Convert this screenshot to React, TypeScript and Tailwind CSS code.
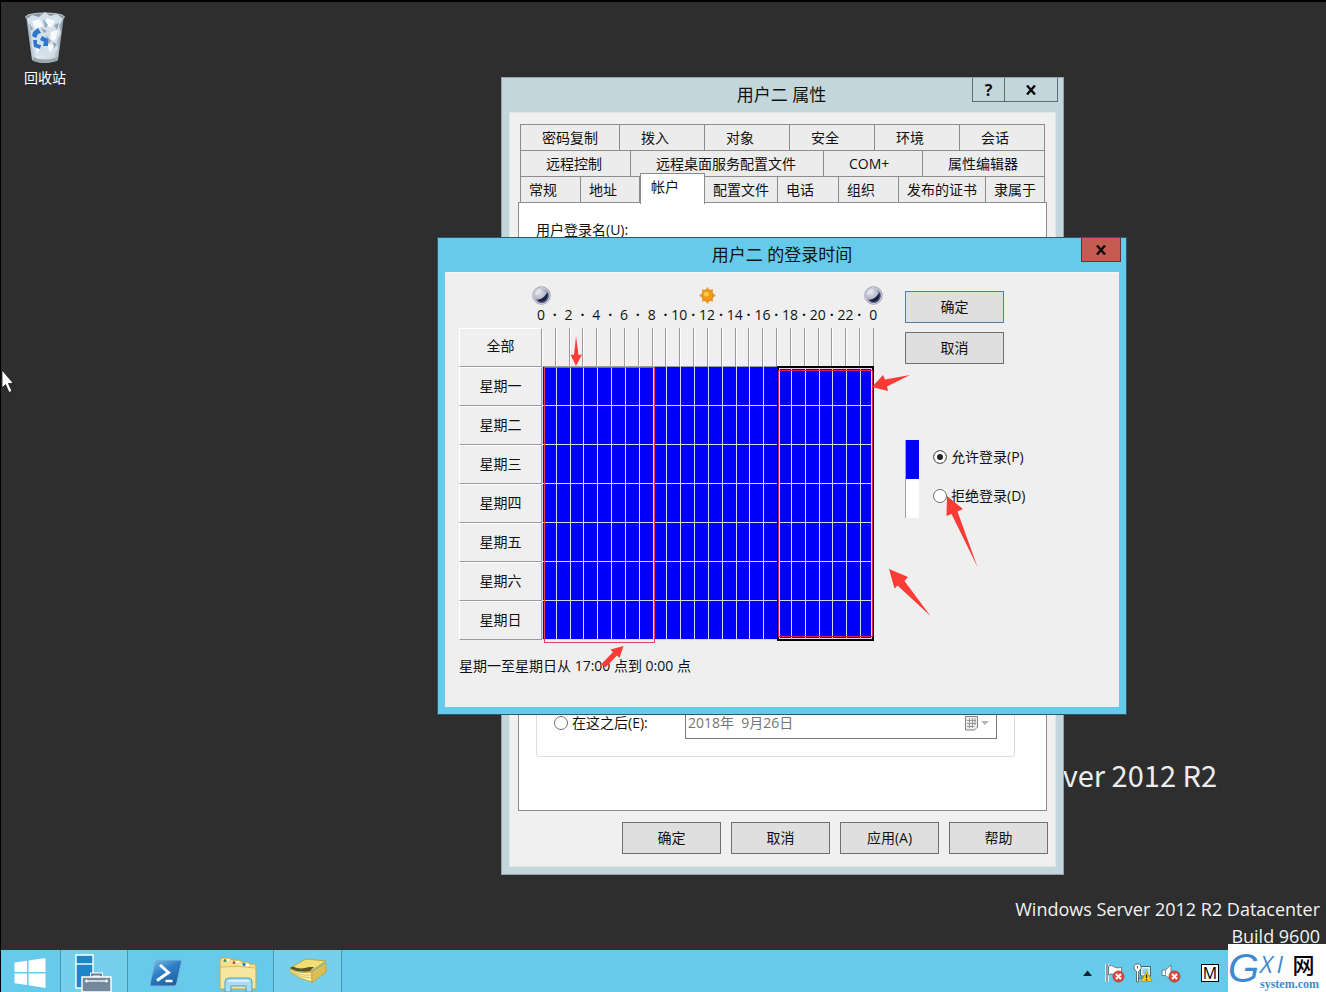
import React from 'react'

type Tab = { name: string; width: string }

const tabRows: { pad: string; tabs: Tab[] }[] = [
    {
        pad: 'pl-[21px]',
        tabs: [
            { name: '密码复制', width: 'w-[99px]' },
            { name: '拨入', width: 'w-[85px]' },
            { name: '对象', width: 'w-[85px]' },
            { name: '安全', width: 'w-[85px]' },
            { name: '环境', width: 'w-[85px]' },
            { name: '会话', width: 'w-[85px]' },
        ],
    },
    {
        pad: 'pl-[25px]',
        tabs: [
            { name: '远程控制', width: 'w-[110px]' },
            { name: '远程桌面服务配置文件', width: 'w-[193px]' },
            { name: 'COM+', width: 'w-[99px]' },
            { name: '属性编辑器', width: 'w-[122px]' },
        ],
    },
    {
        pad: 'pl-2',
        tabs: [
            { name: '常规', width: 'w-[60px]' },
            { name: '地址', width: 'w-[59px]' },
            { name: '帐户', width: 'w-[65px]' },
            { name: '配置文件', width: 'w-[73px]' },
            { name: '电话', width: 'w-[61px]' },
            { name: '组织', width: 'w-[60px]' },
            { name: '发布的证书', width: 'w-[87px]' },
            { name: '隶属于', width: 'w-[59px]' },
        ],
    },
]

const days = ['星期一', '星期二', '星期三', '星期四', '星期五', '星期六', '星期日']
const hours = Array.from({ length: 24 }, (_, i) => i)
const marks = Array.from({ length: 25 }, (_, i) => (i % 2 ? '·' : String(i % 24)))

function PushButton({ children, primary }: { children: React.ReactNode; primary?: boolean }) {
    return (
        <button
            type="button"
            className={`h-8 w-[99px] border text-sm leading-5 bg-[#dfdfdf] ${primary ? 'border-[#4d7fa8]' : 'border-[#6f6f6f]'}`}
        >
            {children}
        </button>
    )
}

function CloseIcon() {
    return (
        <svg className="mx-auto" width="12" height="10" viewBox="0 0 12 10" aria-hidden="true">
            <path d="M2 0.5L10 9.5M10 0.5L2 9.5" stroke="#0b0b0b" strokeWidth="2.4" />
        </svg>
    )
}

function Moon() {
    return (
        <svg width="19" height="19" viewBox="0 0 19 19" aria-hidden="true">
            <defs>
                <radialGradient id="moon" cx="0.34" cy="0.3" r="0.85">
                    <stop offset="0" stopColor="#e4e4ec" />
                    <stop offset="0.5" stopColor="#b4b7c8" />
                    <stop offset="0.75" stopColor="#5a6184" />
                    <stop offset="1" stopColor="#20264a" />
                </radialGradient>
            </defs>
            <circle cx="9.5" cy="9.5" r="8.8" fill="#d8dae4" stroke="#8c90a2" strokeWidth="0.8" />
            <circle cx="9.5" cy="9.5" r="7.4" fill="url(#moon)" />
            <path d="M5 14Q11 13.500 15.500 6.500Q16.600 12 12.500 14.800Q8 17 5 14Z" fill="#1b2146" />
            <path d="M4 9Q4.500 4.500 9 4" stroke="#fff" strokeWidth="1.200" fill="none" opacity="0.700" />
        </svg>
    )
}

function Sun() {
    return (
        <svg width="19" height="19" viewBox="0 0 19 19" aria-hidden="true">
            <path
                d="M9.5 0.8L11.3 4L15.2 3.1L14.5 7L18 9.5L14.5 11.8L15.3 15.6L11.4 15L9.5 18.2L7.5 15L3.8 15.8L4.5 11.8L1 9.5L4.5 7.1L3.7 3.2L7.6 4Z"
                fill="#f0a030"
            />
            <circle cx="9.5" cy="9.5" r="5.6" fill="#f29a12" stroke="#d0801c" strokeWidth="0.7" />
            <circle cx="8.3" cy="8" r="2.6" fill="#ffc648" />
        </svg>
    )
}

function RecycleBin() {
    return (
        <div className="flex w-16 flex-col items-center text-sm leading-5 text-white">
            <svg width="44" height="54" viewBox="0 0 44 54" aria-hidden="true">
                <defs>
                    <linearGradient id="bin" x1="0" x2="1">
                        <stop offset="0" stopColor="#8fa0ae" />
                        <stop offset="0.3" stopColor="#e3ebf1" />
                        <stop offset="0.75" stopColor="#c9d4dc" />
                        <stop offset="1" stopColor="#7d8b96" />
                    </linearGradient>
                </defs>
                <path d="M3 5L9 49Q21 55 35 49L41 5Z" fill="url(#bin)" />
                <ellipse cx="22" cy="6" rx="19.5" ry="4" fill="#8a969e" stroke="#c3cdd4" />
                <path d="M4 8L9 4L16 6L22 1L27 5L34 3L40 8L36 15L38 22L34 30L35 38L29 45L20 43L13 45L9 36L8 22Z" fill="#d3dfe9" />
                <path d="M9 10L17 8L20 15L12 18ZM24 7L32 10L28 17L22 13ZM28 21L35 19L32 30L27 28ZM24 33L31 34L27 42ZM12 33L17 38L14 43Z" fill="#f8fbfd" />
                <path d="M20 8L25 14L22 17ZM31 14L36 12L34 19ZM23 24L28 30L25 33ZM18 17L24 20L21 22ZM6 12L10 18L8 20ZM30 31L34 33L31 37Z" fill="#93a7b8" />
                <path d="M10 21L15 17L18 22L15 23L13 27L9 25ZM19 25L25 28L25 35L20 35L21 31L17 29ZM10 29L14 29L14 33L18 34L17 38L11 36Z" fill="#2f78cf" />
                <path d="M10 46Q21 51 35 46L34 50Q21 54 10 50Z" fill="#9aa7ad" />
            </svg>
            <span className="mt-[3px]">回收站</span>
        </div>
    )
}

function TabStrip() {
    return (
        <div className="ml-[10px] w-[525px]" role="tablist">
            {tabRows.map((row, i) => (
                <div className="flex h-[26px] border-l border-[#8c8c8c]" key={i}>
                    {row.tabs.map((tab) =>
                        tab.name === '帐户' ? (
                            <button
                                type="button"
                                role="tab"
                                aria-selected="true"
                                key={tab.name}
                                className="relative z-10 -mt-[3px] h-[31px] w-[65px] border-x border-t border-[#8c8c8c] bg-white pb-1 pl-[10px] text-left text-sm leading-5"
                            >
                                {tab.name}
                            </button>
                        ) : (
                            <button
                                type="button"
                                role="tab"
                                aria-selected="false"
                                key={tab.name}
                                className={`whitespace-nowrap border-r border-t border-[#8c8c8c] bg-[#ececec] text-left text-sm leading-5 ${row.pad} ${tab.width}`}
                            >
                                {tab.name}
                            </button>
                        )
                    )}
                </div>
            ))}
        </div>
    )
}

function PropertiesWindow() {
    return (
        <section className="absolute left-[500px] top-[75px] w-[563px] border border-[#8fa3ab] bg-[#c3d6dc] px-[7px] pb-[7px] text-[#111]">
            <header className="flex h-[34px] items-start">
                <span className="w-[82px]" />
                <h2 className="flex-1 pt-[5px] text-center text-[17px] leading-6">用户二 属性</h2>
                <button type="button" aria-label="帮助" className="h-6 w-[33px] border border-t-0 border-[#5d6d74] text-base font-bold leading-5">
                    ?
                </button>
                <button type="button" aria-label="关闭" className="-ml-px -mr-[2px] h-6 w-[54px] border border-t-0 border-[#5d6d74]">
                    <CloseIcon />
                </button>
            </header>
            <div className="border border-[#dde6e9] bg-[#f0f0f0] pb-3 pt-[11px]">
                <TabStrip />
                <div className="mx-2 flex h-[609px] flex-col justify-between border border-[#8c8c8c] bg-white pb-[53px] pl-[17px] pr-[31px] pt-[17px]">
                    <label className="text-sm leading-5">用户登录名(U):</label>
                    <div className="flex items-start rounded-[3px] border border-[#dcdcdc] pb-[17px] pl-[17px] pr-[17px] pt-2">
                        <label className="flex flex-1 items-center gap-1 pt-[6px] text-sm leading-5">
                            <input
                                type="radio"
                                name="expires"
                                className="size-[14px] appearance-none rounded-full border border-[#707070] bg-white"
                            />
                            在这之后(E):
                        </label>
                        <div className="flex h-8 w-[312px] items-center border border-[#7a7a7a] pl-[2px] pr-[7px]">
                            <input
                                type="text"
                                aria-label="日期"
                                disabled
                                defaultValue="2018年  9月26日"
                                className="min-w-0 flex-1 whitespace-pre text-sm leading-5 text-[#757575]"
                            />
                            <svg width="24" height="15" viewBox="0 0 24 15" aria-hidden="true">
                                <path d="M0.5 0.5H12.5V11L9.5 14H0.5Z" fill="#ececec" stroke="#808080" />
                                <path d="M2 4.5H11M2 7.5H11M2 10.5H9M4.5 2V12M7.5 2V12M10 2V9" stroke="#8c8c8c" strokeWidth="0.8" />
                                <path d="M16 5H24L20 9Z" fill="#b4b4b4" />
                            </svg>
                        </div>
                    </div>
                </div>
                <div className="mt-[11px] flex justify-end gap-[10px] pr-[7px]">
                    <PushButton>确定</PushButton>
                    <PushButton>取消</PushButton>
                    <PushButton>应用(A)</PushButton>
                    <PushButton>帮助</PushButton>
                </div>
            </div>
        </section>
    )
}

function HoursTable() {
    return (
        <div className="relative mt-[3px]">
            <table className="w-full table-fixed border-separate border-spacing-0 text-sm leading-5">
                <thead>
                    <tr className="h-[39px]">
                        <th className="w-[83px] border-b border-l border-r border-t border-b-[#9a9a9a] border-l-white border-r-[#9a9a9a] border-t-white pb-1 font-normal">
                            全部
                        </th>
                        {hours.map((h) => (
                            <th key={h} className="border-b border-l border-r border-b-[#9a9a9a] border-l-white border-r-[#9a9a9a]" />
                        ))}
                    </tr>
                </thead>
                <tbody>
                    {days.map((day) => (
                        <tr key={day} className="h-[39px]">
                            <th className="border-b border-l border-r border-t border-b-[#9a9a9a] border-l-white border-r-[#9a9a9a] border-t-white pb-[2px] font-normal">
                                {day}
                            </th>
                            {hours.map((h) => (
                                <td key={h} className="border-b border-l border-[#d5d5f2] bg-[#0000fa]" />
                            ))}
                        </tr>
                    ))}
                </tbody>
            </table>
            {/* selected block, 17:00 to 0:00 */}
            <div className="absolute right-0 top-[38px] h-[275px] w-[97px] border-2 border-black shadow-[inset_0_0_0_1px_#d5d5f2]" />
            <div className="absolute right-[1px] top-[42px] h-[267px] w-[95px] border border-[#d8204e]" />
            <div className="absolute left-[85px] top-[39px] h-[276px] w-[111px] border border-[#f03c5c]" />
        </div>
    )
}

function LogonHoursDialog() {
    return (
        <section className="absolute left-[436px] top-[235px] w-[690px] border border-[#2c5a68] bg-[#66cbea] px-[7px] pb-[7px] text-[#111]">
            <header className="flex h-[34px] items-start">
                <span className="w-[38px]" />
                <h2 className="flex-1 pt-[5px] text-center text-[17px] leading-6">用户二 的登录时间</h2>
                <button type="button" aria-label="关闭" className="-mr-[2px] h-6 w-10 border border-t-0 border-[#6b2f38] bg-[#c75a50]">
                    <CloseIcon />
                </button>
            </header>
            <div className="flex border-t border-[#f4f4f4] bg-[#efefef] pb-[31px] pl-[14px] pt-[13px]">
                <div className="w-[415px] shrink-0">
                    <div className="ml-[73px] flex w-[351px] justify-between">
                        <Moon />
                        <Sun />
                        <Moon />
                    </div>
                    <div className="ml-[75px] flex h-5 w-[346px] text-sm leading-5">
                        {marks.map((m, i) => (
                            <span key={i} className={`flex w-0 flex-1 justify-center ${m === '·' ? 'font-bold' : ''}`}>
                                {m}
                            </span>
                        ))}
                    </div>
                    <HoursTable />
                    <p className="mt-4 text-sm leading-5">星期一至星期日从 17:00 点到 0:00 点</p>
                </div>
                <div className="ml-[31px] pt-[5px]">
                    <div className="flex flex-col gap-[9px]">
                        <PushButton primary>确定</PushButton>
                        <PushButton>取消</PushButton>
                    </div>
                    <div className="mt-[76px] flex gap-[14px]">
                        <div className="w-[14px] border-l border-[#a0a0a0]">
                            <div className="h-[39px] bg-[#0000fa]" />
                            <div className="h-[39px] bg-white" />
                        </div>
                        <div className="text-sm leading-5">
                            <label className="flex h-[39px] items-center gap-1 pb-[6px]">
                                <input
                                    type="radio"
                                    name="logon"
                                    defaultChecked
                                    className="size-[14px] appearance-none rounded-full border border-[#707070] bg-white checked:bg-[#222] checked:shadow-[inset_0_0_0_3px_white]"
                                />
                                允许登录(P)
                            </label>
                            <label className="flex h-[39px] items-center gap-1 pb-[6px]">
                                <input
                                    type="radio"
                                    name="logon"
                                    className="size-[14px] appearance-none rounded-full border border-[#707070] bg-white checked:bg-[#222] checked:shadow-[inset_0_0_0_3px_white]"
                                />
                                拒绝登录(D)
                            </label>
                        </div>
                    </div>
                </div>
            </div>
            <svg className="pointer-events-none absolute left-0 top-0" width="688" height="476" viewBox="438 238 688 476" fill="#fb3b35" aria-hidden="true">
                <path d="M576 336L578.5 355L582 354.500L576 366L570.500 354.500L574 355Z" />
                <path d="M872 387L883 375L885 379.500L910 375L887 386.500L888 391Z" />
                <path d="M947 496L963 509L957.500 511.500L977.500 567L951.500 514L946.500 516Z" />
                <path d="M889 569L908 577L904.500 581L930.500 616L897.500 585.500L894.500 588.500Z" />
                <path d="M623.500 646L619.500 658L617 655.500L605.500 667.500L601.500 664L613 652L610.500 649.500Z" />
            </svg>
        </section>
    )
}

function Taskbar() {
    return (
        <footer className="flex h-[42px] items-stretch bg-[#66cbea]">
            <button type="button" aria-label="开始" className="flex w-[60px] items-center justify-center border-r border-[#4796b0] pr-[2px] pt-1">
                <svg width="32" height="30" viewBox="0 0 32 30" fill="#fff" aria-hidden="true">
                    <path d="M0.500 4.500L13 2.700V14H0.500ZM14.500 2.500L31.500 0V14H14.500ZM0.500 15.500H13V27L0.500 25.300ZM14.500 15.500H31.500V30L14.500 27.300Z" />
                </svg>
            </button>
            <button type="button" aria-label="服务器管理器" className="flex w-[67px] items-end justify-center border-r border-[#4796b0] bg-[#75d0ec]">
                <svg width="38" height="38" viewBox="0 0 38 38" aria-hidden="true">
                    <path d="M1 1H18V34H1Z" fill="#1d86c8" stroke="#fff" strokeWidth="1.400" />
                    <path d="M1 10H18" stroke="#fff" strokeWidth="1.400" />
                    <path d="M17 23V20.500H26V23" fill="none" stroke="#fff" strokeWidth="4" />
                    <path d="M17 23V20.500H26V23" fill="none" stroke="#6b7f92" strokeWidth="2" />
                    <path d="M7 23H36V38H7Z" fill="#74889c" stroke="#fff" strokeWidth="1.400" />
                    <path d="M11 27H32" stroke="#fff" strokeWidth="1.300" />
                    <path d="M12 25.500L10 27L12 28.500ZM31 25.500L33 27L31 28.500Z" fill="#fff" stroke="#fff" strokeWidth="0.600" />
                </svg>
            </button>
            <button type="button" aria-label="PowerShell" className="flex w-[75px] items-center justify-center pt-1">
                <svg width="34" height="28" viewBox="0 0 34 28" aria-hidden="true">
                    <defs>
                        <linearGradient id="ps" x1="0" y1="0" x2="0.600" y2="1">
                            <stop offset="0" stopColor="#7fc0ec" />
                            <stop offset="0.500" stopColor="#2f7fc4" />
                            <stop offset="1" stopColor="#1f62a4" />
                        </linearGradient>
                    </defs>
                    <path d="M8 1H31Q33 1 32.500 3L27.500 25Q27 27 25 27H2.500Q0.500 27 1 25L6 3Q6.500 1 8 1Z" fill="url(#ps)" stroke="#7eb4dc" />
                    <path d="M11 6L19.500 13.500L8 21.500" fill="none" stroke="#fff" strokeWidth="3" />
                    <path d="M16.500 22H23.500" stroke="#fff" strokeWidth="2.500" />
                </svg>
            </button>
            <button type="button" aria-label="文件资源管理器" className="flex w-[70px] items-end justify-center">
                <svg width="40" height="35" viewBox="0 0 40 35" aria-hidden="true">
                    <path d="M2 3Q2 1 4 1H12L14 3H22L24 5H30L32 7H36Q38 7 38 9V32H2Z" fill="#f3df90" stroke="#c8a94e" />
                    <path d="M5 3H11M14 5H21M23 8H31" stroke="#fff" strokeWidth="2" />
                    <path d="M3 10H37V31H3Z" fill="#f6e69f" />
                    <path d="M3 10Q20 8 37 11" stroke="#d9bb63" fill="none" />
                    <circle cx="7" cy="3.500" r="1.500" fill="#2f9a4b" />
                    <circle cx="16" cy="5.500" r="1.500" fill="#d0442e" />
                    <circle cx="26" cy="7.500" r="1.700" fill="#2d7fd0" />
                    <path d="M7 35V25Q7 21 11 21H30Q34 21 34 25V35H28V29H13V35Z" fill="#a6dcf5" stroke="#4e9fc6" />
                    <path d="M10 24H31" stroke="#e5f7ff" strokeWidth="1.500" />
                </svg>
            </button>
            <button type="button" aria-label="用户和计算机" className="flex w-[69px] justify-center border-x border-[#4796b0] bg-[#75d0ec] pt-2">
                <svg width="38" height="26" viewBox="0 0 38 26" aria-hidden="true">
                    <path d="M1 10L17 1L37 3L22 13Z" fill="#f2df73" stroke="#b99b35" strokeWidth="0.800" />
                    <path d="M1 10L4 8.500Q11 12 20 9L25 9L21 13Q8 15 1 10Z" fill="#5b561f" />
                    <path d="M1 11Q10 16 23 14L23 24Q10 21 1 14Z" fill="#fbf2a8" stroke="#b99b35" strokeWidth="0.800" />
                    <path d="M23 14L37 5V14L23 24.500Z" fill="#e2c456" stroke="#b99b35" strokeWidth="0.800" />
                    <path d="M2 13Q11 18 23 17M3 15Q12 20 23 20M24 18L36 9M24 21L36 12" stroke="#c7a940" strokeWidth="0.700" fill="none" />
                </svg>
            </button>
            <div className="ml-auto flex items-center gap-2 pr-[107px] pt-[3px]">
                <svg className="mr-1" width="11" height="6" viewBox="0 0 11 6" aria-label="显示隐藏的图标">
                    <path d="M1 6L5.500 0.500L10 6Z" fill="#10252c" />
                </svg>
                <svg width="20" height="20" viewBox="0 0 20 20" aria-label="操作中心">
                    <path d="M2 1V19" stroke="#fff" strokeWidth="3.500" />
                    <path d="M2 1V19" stroke="#5b6c75" strokeWidth="1.300" />
                    <path d="M3.500 3Q7 1.500 9.500 4Q13 6 16.500 4V12Q12 14 9 11.500Q6 10 3.500 12Z" fill="#fff" stroke="#65757e" strokeWidth="0.900" />
                    <circle cx="13.500" cy="13.500" r="5.500" fill="#e14a3d" stroke="#a82a22" strokeWidth="0.700" />
                    <path d="M11 11L16 16M16 11L11 16" stroke="#fff" strokeWidth="2" />
                </svg>
                <svg width="20" height="20" viewBox="0 0 20 20" aria-label="网络">
                    <path d="M7.500 3.500H17.500V13H7.500Z" fill="#dff2f8" stroke="#4f626b" />
                    <path d="M9.500 5.500H15.500V11H9.500Z" fill="#8fd0e6" />
                    <path d="M2.500 1H6.500L8 3V6L5.500 8.500V19H3.500V8.500L1 6V3Z" fill="#fff" stroke="#4f626b" strokeWidth="0.900" />
                    <path d="M4.500 3V5.500" stroke="#4f626b" />
                    <path d="M5.500 15H10" stroke="#4f626b" />
                    <path d="M13.500 8.500L19 18.500H8Z" fill="#f9d32c" stroke="#a98a12" strokeWidth="0.700" />
                    <path d="M13.500 11.500V15M13.500 16V17.500" stroke="#222" strokeWidth="1.400" />
                </svg>
                <svg width="20" height="20" viewBox="0 0 20 20" aria-label="音量">
                    <path d="M1 7H4.500L10 2V17L4.500 12.500H1Z" fill="#fff" stroke="#65757e" strokeWidth="0.900" />
                    <path d="M4.500 7V12.500" stroke="#65757e" strokeWidth="0.700" />
                    <circle cx="13.500" cy="13.500" r="5.500" fill="#e14a3d" stroke="#a82a22" strokeWidth="0.700" />
                    <path d="M11 11L16 16M16 11L11 16" stroke="#fff" strokeWidth="2" />
                </svg>
                <span className="ml-3 flex size-[18px] items-center justify-center border border-black bg-white text-base leading-4 text-black">M</span>
            </div>
        </footer>
    )
}

function SiteMark() {
    return (
        <div className="absolute bottom-0 right-0 z-20 flex h-12 w-[98px] bg-white text-[#3f8bd0]">
            <span className="w-8 font-['Liberation_Sans',sans-serif] text-[40px] italic leading-[48px]">G</span>
            <div>
                <div className="flex h-8 items-center gap-1 pt-2">
                    <span className="text-2xl italic leading-6">X</span>
                    <span className="w-3 text-2xl italic leading-6">I</span>
                    <span className="text-[22px] font-medium leading-6 text-black">网</span>
                </div>
                <div className="font-['Liberation_Serif',serif] text-xs font-bold leading-4">system.com</div>
            </div>
        </div>
    )
}

function App() {
    return (
        <div className="relative flex min-h-screen flex-col overflow-hidden border-l border-t-2 border-black bg-[#2e2e2e] font-['Open_Sans','Noto_Sans_CJK_SC',sans-serif]">
            <main className="relative flex-1">
                <div className="pl-3 pt-[9px]">
                    <RecycleBin />
                </div>
                <p className="absolute right-[109px] top-[752px] whitespace-nowrap font-['Noto_Sans_CJK_SC',sans-serif] text-[29px] leading-10 text-[#ececec]">
                    Windows Server 2012 R2
                </p>
                <div className="absolute bottom-0 right-[6px] text-right text-lg leading-[27px] text-[#f2f2f2]">
                    <p>Windows Server 2012 R2 Datacenter</p>
                    <p>Build 9600</p>
                </div>
                <PropertiesWindow />
                <LogonHoursDialog />
                <svg className="absolute left-0 top-[366px]" width="14" height="26" viewBox="0 0 14 26" aria-hidden="true">
                    <path d="M1 2V20L4.500 16.500L8 24.500L11 23.200L7.500 15.500H12.500Z" fill="#fff" stroke="#111" strokeWidth="0.800" />
                </svg>
            </main>
            <Taskbar />
            <SiteMark />
        </div>
    )
}

export default App
